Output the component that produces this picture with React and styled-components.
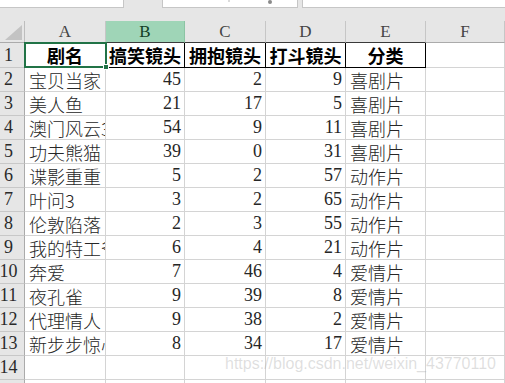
import React from 'react'
import styled, { createGlobalStyle } from 'styled-components';

const GlobalStyle = createGlobalStyle`
    html, body {
        margin: 0;
        padding: 0;
        background: #fff;
    }
    body {
        font-family: "Noto Sans CJK SC", "Liberation Sans", sans-serif;
    }
`

const Page = styled.div`
    position: relative;
    width: 505px;
    height: 383px;
    overflow: hidden;
    background: #e6e6e6;
`

const TopStrip = styled.div`
    display: flex;
    height: 8px;
    background: #e6e6e6;
`

const Box = styled.div`
    position: relative;
    box-sizing: border-box;
    height: 8px;
    background: #fff;
    border-bottom: 1px solid #c6c6c6;
    border-left: ${p => (p.$first ? 'none' : '1px solid #c6c6c6')};
    border-right: ${p => (p.$last ? 'none' : '1px solid #c6c6c6')};
    width: ${p => (p.$w ? `${p.$w}px` : 'auto')};
    flex: ${p => (p.$w ? '0 0 auto' : '1 1')};
`

const Gap = styled.div`
    width: ${p => p.$w}px;
`

const Mark = styled.span`
    position: absolute;
    top: 0;
    left: ${p => p.$x}px;
    width: ${p => p.$size}px;
    height: ${p => p.$size}px;
    border-radius: 50%;
    background: ${p => p.$color};
`

const Spacer = styled.div`
    height: 13px;
`

const Grid = styled.div`
    display: grid;
    grid-template-columns: 25px 81px 79px 81px 80px 80px 79px;
    grid-template-rows: 22px 25px repeat(14, 24px);
    background: #fff;
`

const Corner = styled.div`
    box-sizing: border-box;
    background: #e6e6e6;
    border-right: 1px solid #bdbdbd;
    border-bottom: 1px solid #ababab;
    display: flex;
    align-items: flex-end;
    justify-content: flex-end;
    padding: 0 2px 2px 0;
`

const ColHead = styled.div`
    box-sizing: border-box;
    display: flex;
    align-items: center;
    justify-content: center;
    background: ${p => (p.$active ? '#9fd5b7' : '#e6e6e6')};
    color: ${p => (p.$active ? '#123f26' : '#444')};
    border-right: 1px solid ${p => (p.$active ? '#8cc4a4' : '#c6c6c6')};
    border-bottom: 1px solid ${p => (p.$dark ? '#3a3a3a' : '#ababab')};
    font-family: "Liberation Serif", serif;
    font-size: 17px;
    padding-top: 1px;
`

const RowHead = styled.div`
    box-sizing: border-box;
    display: flex;
    align-items: center;
    justify-content: center;
    padding-right: 7px;
    background: #e6e6e6;
    color: #2a2a2a;
    border-right: 1px solid #ababab;
    border-bottom: 1px solid #c8c8c8;
    font-family: "Liberation Serif", serif;
    font-size: 18px;
    white-space: nowrap;
    overflow: hidden;
`

const Cell = styled.div`
    position: relative;
    box-sizing: border-box;
    display: flex;
    align-items: center;
    justify-content: ${p => (p.$num ? 'flex-end' : p.$head ? 'center' : 'flex-start')};
    padding: ${p => (p.$num ? '0 3px 0 0' : p.$head ? '0' : '0 0 0 4px')};
    border-right: 1px solid ${p => (p.$head ? '#000' : '#d4d4d4')};
    border-bottom: 1px solid ${p => (p.$head ? '#000' : '#d4d4d4')};
    font-family: ${p => (p.$num ? '"Liberation Serif", serif' : '"Noto Sans CJK SC", sans-serif')};
    font-size: 18px;
    font-weight: ${p => (p.$head ? 700 : 300)};
    color: ${p => (p.$head ? '#000' : '#262626')};
    white-space: nowrap;
    overflow: ${p => (p.$selected ? 'visible' : 'hidden')};
    z-index: ${p => (p.$selected ? 2 : 'auto')};
`

const Clip = styled.span`
    display: block;
    overflow: hidden;
    width: 100%;
`

const Selection = styled.div`
    position: absolute;
    left: -1px;
    top: -1px;
    right: -2px;
    bottom: -1px;
    border: 2px solid #217346;
    pointer-events: none;
`

const Handle = styled.div`
    position: absolute;
    right: -4px;
    bottom: -4px;
    width: 6px;
    height: 6px;
    background: #217346;
    border: 1px solid #fff;
    box-sizing: border-box;
`

const Watermark = styled.div`
    position: absolute;
    left: 225px;
    top: 355px;
    font-family: "Liberation Sans", Arial, sans-serif;
    font-size: 16px;
    color: rgba(160, 160, 160, 0.34);
    white-space: nowrap;
    pointer-events: none;
`

const columns = ['A', 'B', 'C', 'D', 'E', 'F'];

const header = ['剧名', '搞笑镜头', '拥抱镜头', '打斗镜头', '分类'];

const rows = [
    ['宝贝当家', 45, 2, 9, '喜剧片'],
    ['美人鱼', 21, 17, 5, '喜剧片'],
    ['澳门风云3', 54, 9, 11, '喜剧片'],
    ['功夫熊猫', 39, 0, 31, '喜剧片'],
    ['谍影重重', 5, 2, 57, '动作片'],
    ['叶问3', 3, 2, 65, '动作片'],
    ['伦敦陷落', 2, 3, 55, '动作片'],
    ['我的特工爷爷', 6, 4, 21, '动作片'],
    ['奔爱', 7, 46, 4, '爱情片'],
    ['夜孔雀', 9, 39, 8, '爱情片'],
    ['代理情人', 9, 38, 2, '爱情片'],
    ['新步步惊心', 8, 34, 17, '爱情片'],
];

const CornerTriangle = () => (
    <svg width="17" height="15" viewBox="0 0 17 15">
        <polygon points="17,0 17,15 0,15" fill="#c3c3c3" />
    </svg>
);

const App = () => {
    return (
        <Page>
            <GlobalStyle />
            <TopStrip>
                <Box $first $w={124} />
                <Gap $w={38} />
                <Box $w={136}>
                    <Mark $x={65} $size={2} $color="#cfcfcf" />
                    <Mark $x={105} $size={4} $color="#8a8a8a" />
                </Box>
                <Gap $w={4} />
                <Box $last />
            </TopStrip>
            <Spacer />

            <Grid>
                <Corner>
                    <CornerTriangle />
                </Corner>
                {columns.map((c, i) => (
                    <ColHead key={c} $active={c === 'B'} $dark={i < 5}>{c}</ColHead>
                ))}

                <RowHead>1</RowHead>
                {header.map((h, i) => (
                    <Cell key={h} $head $selected={i === 0}>
                        {h}
                        {i === 0 && (
                            <Selection>
                                <Handle />
                            </Selection>
                        )}
                    </Cell>
                ))}
                <Cell />

                {rows.map((r, ri) => (
                    <React.Fragment key={ri}>
                        <RowHead>{ri + 2}</RowHead>
                        <Cell><Clip>{r[0]}</Clip></Cell>
                        <Cell $num>{r[1]}</Cell>
                        <Cell $num>{r[2]}</Cell>
                        <Cell $num>{r[3]}</Cell>
                        <Cell>{r[4]}</Cell>
                        <Cell />
                    </React.Fragment>
                ))}

                {[14, 15].map(n => (
                    <React.Fragment key={n}>
                        <RowHead>{n}</RowHead>
                        <Cell />
                        <Cell />
                        <Cell />
                        <Cell />
                        <Cell />
                        <Cell />
                    </React.Fragment>
                ))}
            </Grid>

            <Watermark>https://blog.csdn.net/weixin_43770110</Watermark>
        </Page>
    );
}

export default App
